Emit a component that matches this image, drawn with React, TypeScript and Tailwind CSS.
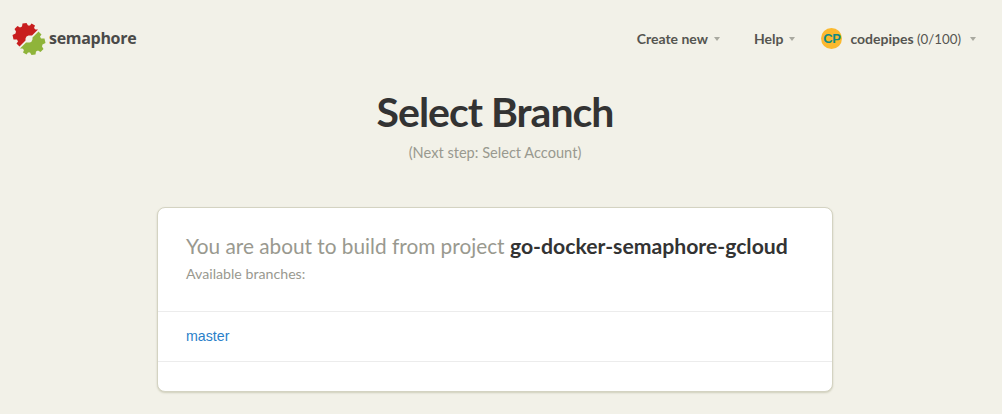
const font = "font-['Lato','Liberation_Sans',sans-serif]";

const gear =
  'M6.500 23.500L3.500 20.500L5 18.500L4 16.500L.5 16.500L-.5 12L2.500 10.500L3 8.500L1.500 6L4.500 3L7 4.500L9 3.500L9.500 .5L13.500 0L15 2.500L17 2.500L18.500 .5L22 2.500L21 5L22.500 6.500L25 6.500L19 12.500L15.500 12.500Q13 13 12.500 15.500L12.500 17.500Z';

function Logo() {
  return (
    <svg width="32" height="32" viewBox="0 0 32 32" className="overflow-visible">
      <path fill="#c81e1e" d={gear} />
      <path fill="#8fb43a" d={gear} transform="rotate(180 16 16)" />
    </svg>
  );
}

function Caret() {
  return <span className="ml-[6px] h-0 w-0 border-x-[3.5px] border-t-[4px] border-x-transparent border-t-[#a9a9a0]" />;
}

export default function App() {
  return (
    <div className={`${font} h-[414px] overflow-hidden bg-[#f2f1e8] text-[#3a3a3a]`}>
      <div className="w-[990px]">
        <header className="flex h-[78px] items-center justify-between pl-[13px] pr-[14px]">
          <div className="flex items-center gap-[4px]">
            <Logo />
            <span className="mt-[-2px] font-['Open_Sans',sans-serif] text-[16px] font-bold leading-none tracking-[-0.3px] text-[#4a4a48]">semaphore</span>
          </div>
          <nav className="mt-[-1px] flex items-center text-[14px] font-bold text-[#555550]">
            <span className="flex items-center">Create new<Caret /></span>
            <span className="ml-[34px] flex items-center">Help<Caret /></span>
            <span className="ml-[26px] flex items-center">
              <span className="mr-[8px] flex h-[21px] w-[21px] items-center justify-center rounded-full bg-[#fbb92e] font-['Liberation_Sans',sans-serif] text-[13px] font-bold tracking-[-0.3px] text-[#0e8a83]">CP</span>
              <span className="mt-[1px]">
                codepipes <span className="text-[13.300px] font-normal">(0/100)</span>
              </span>
              <span className="ml-[3px] flex"><Caret /></span>
            </span>
          </nav>
        </header>
        <main className="flex flex-col items-center">
          <h1 className="mt-[10px] text-[41px] font-bold leading-[48px] tracking-[-1px] text-[#333]">Select Branch</h1>
          <p className="mt-[7px] text-[14.600px] leading-[20px] text-[#99998f]">(Next step: Select Account)</p>
          <section className="mt-[44px] h-[185px] w-[676px] rounded-[8px] border border-[#d4d3c2] bg-white shadow-[0_1px_2px_#cfcebb]">
            <div className="h-[104px] border-b border-[#ececec] px-[28px] pt-[24px]">
              <h2 className="text-[20.800px] leading-[28px] text-[#99998f]">
                You are about to build from project <b className="text-[21.200px] text-[#333]">go-docker-semaphore-gcloud</b>
              </h2>
              <p className="mt-[4px] text-[14.200px] leading-[20px] text-[#99998f]">Available branches:</p>
            </div>
            <div className="flex h-[50px] items-center border-b border-[#ececec] px-[28px] font-['Liberation_Sans',sans-serif] text-[14.200px] text-[#2a7fc9]">master</div>
          </section>
        </main>
      </div>
    </div>
  );
}
